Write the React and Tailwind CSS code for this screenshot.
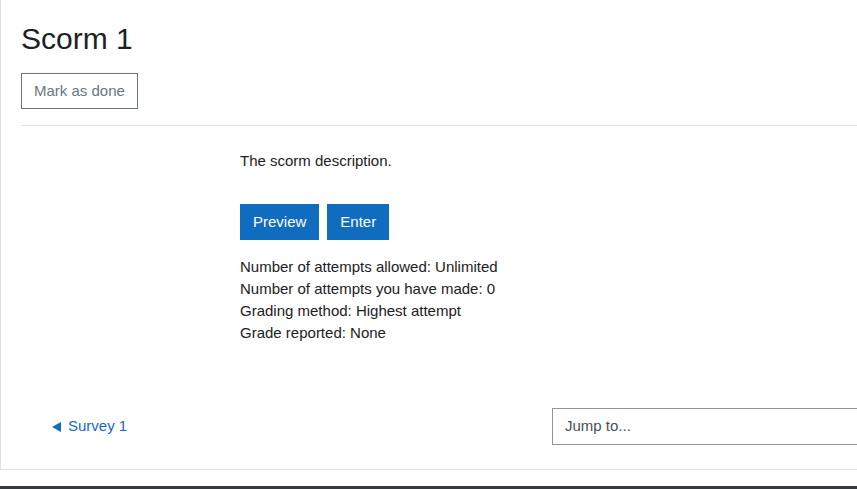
export default function App() {
  return (
    <div className="w-[857px] h-[489px] overflow-hidden bg-white text-[#1d2125]" style={{ fontFamily: '"Liberation Sans", Arial, sans-serif' }}>
      <div className="h-[470px] border-l border-b border-[#dee2e6] pl-5 pt-[21px] flex flex-col">
        <h2 className="text-[30px] leading-[36px] font-normal m-0">Scorm 1</h2>
        <div className="mt-4">
          <button className="h-[36px] px-3 border border-[#6c757d] text-[#6c757d] text-[15px] bg-white">Mark as done</button>
        </div>
        <div className="mt-4 border-t border-[#dee2e6]"></div>
        <div className="pl-[219px] pt-[24px]">
          <p className="text-[15px] leading-[22px]">The scorm description.</p>
          <div className="mt-[32px] flex gap-2">
            <button className="h-[36px] px-[13px] bg-[#0f6cbf] text-white text-[15px]">Preview</button>
            <button className="h-[36px] px-[13px] bg-[#0f6cbf] text-white text-[15px]">Enter</button>
          </div>
          <div className="mt-[16px] text-[15px] leading-[22px]">
            <div>Number of attempts allowed: Unlimited</div>
            <div>Number of attempts you have made: 0</div>
            <div>Grading method: Highest attempt</div>
            <div>Grade reported: None</div>
          </div>
        </div>
        <div className="mt-[64px] flex items-center">
          <a className="ml-[31px] text-[#0f6cbf] text-[15px] flex items-center gap-[7px]">
            <svg width="9" height="10" viewBox="0 0 9 10" className="mt-[1px]"><polygon points="0,5 9,0 9,10" fill="#0f6cbf" /></svg>
            <span>Survey 1</span>
          </a>
          <div className="ml-auto w-[321px] -mr-[16px] h-[37px] border border-[#8f959e] flex items-center pl-3 text-[15px] text-[#495057]">Jump to...</div>
        </div>
      </div>
      <div className="mt-[16px] h-[10px] bg-[#343a40]"></div>
    </div>
  );
}
